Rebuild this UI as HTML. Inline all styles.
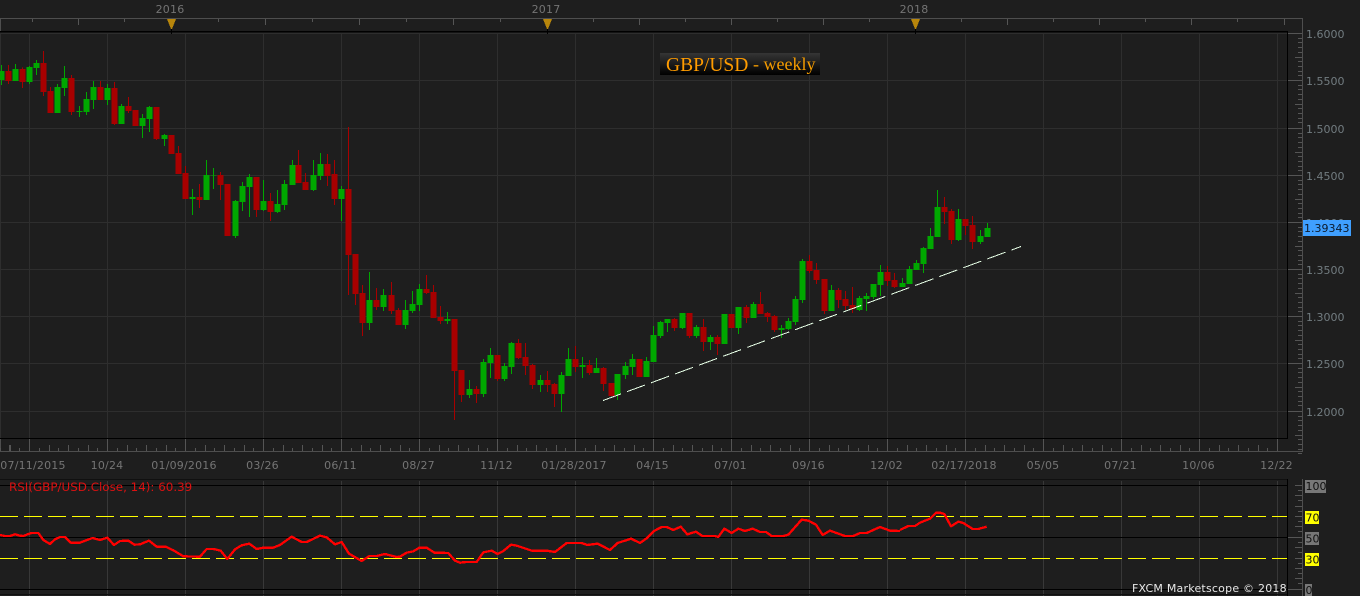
<!DOCTYPE html>
<html>
<head>
<meta charset="utf-8">
<title>GBP/USD weekly</title>
<style>
html,body{margin:0;padding:0;background:#1e1e1e;width:1360px;height:596px;overflow:hidden}
svg{display:block}
text{font-family:"DejaVu Sans","Liberation Sans",sans-serif;font-size:11px}
.d text,.d{fill:#747474;text-anchor:middle;letter-spacing:.2px}
.a text{fill:#727c80}
.c{shape-rendering:crispEdges}
.w{fill:none;stroke-width:1}
.b{fill:none;stroke-width:6}
.g{stroke:#00a800}
.r{stroke:#a80000}
</style>
</head>
<body>
<svg width="1360" height="596" viewBox="0 0 1360 596" xmlns="http://www.w3.org/2000/svg">
<defs>
<pattern id="bt" x="29" y="439" width="78" height="12" patternUnits="userSpaceOnUse">
<path d="M.5 0V12M10.5 9V12M20.5 6V12M29.5 9V12M39.5 6V12M49.5 9V12M59.5 6V12M68.5 9V12" stroke="#555" fill="none"/>
</pattern>
<g id="t" fill="none" stroke="#555">
<path d="M1288 .5H1302M1298 5.5H1302M1298 9.5H1302M1298 14.5H1302M1298 19.5H1302M1295 24.5H1302M1298 28.5H1302M1298 33.5H1302M1298 38.5H1302M1298 42.5H1302"/>
</g>
<g id="u" fill="none" stroke="#555">
<path d="M1295 .5H1302M1298 5.5H1302"/>
</g>
</defs>

<!-- grid -->
<g class="c" fill="none">
<path stroke="#2e2e2e" d="M0 33.5H1287M0 80.5H1287M0 128.5H1287M0 175.5H1287M0 222.5H1287M0 269.5H1287M0 316.5H1287M0 363.5H1287M0 411.5H1287"/>
<path stroke="#2e2e2e" d="M.5 33V438M29.5 33V438M107.5 33V438M185.5 33V438M263.5 33V438M341.5 33V438M419.5 33V438M497.5 33V438M575.5 33V438M653.5 33V438M731.5 33V438M809.5 33V438M887.5 33V438M965.5 33V438M1043.5 33V438M1121.5 33V438M1199.5 33V438M1277.5 33V438"/>
<path stroke="#383838" d="M29.5 481V596M107.5 481V596M185.5 481V596M263.5 481V596M341.5 481V596M419.5 481V596M497.5 481V596M575.5 481V596M653.5 481V596M731.5 481V596M809.5 481V596M887.5 481V596M965.5 481V596M1043.5 481V596M1121.5 481V596M1199.5 481V596M1277.5 481V596"/>

<!-- top ruler -->
<path stroke="#4e4e4e" d="M0 18.5H1302.5M.5 18V31M1302.5 18V451M0 451.5H1303M.5 439V451"/>
<path stroke="#555" d="M32.5 19V22M78.5 19V25M124.5 19V22M218.5 19V22M265.5 19V25M312.5 19V22M359.5 19V25M406.5 19V22M453.5 19V25M500.5 19V22M593.5 19V22M639.5 19V25M685.5 19V22M731.5 19V25M777.5 19V22M823.5 19V25M869.5 19V22M961.5 19V22M1007.5 19V25M1053.5 19V22M1099.5 19V25M1145.5 19V22M1191.5 19V25M1237.5 19V22M1284.5 19V25"/>
<path stroke="#000" d="M0 31.5H1288M1287.5 31V439M0 438.5H1288"/>
<path stroke="#141414" d="M0 32.5H1287"/>
<!-- bottom ruler ticks -->
<rect x="0" y="439" width="1287" height="12" fill="url(#bt)"/>
<path stroke="#555" d="M9.5 445V451M19.5 448V451"/>
<!-- right axis ticks -->
<use href="#t" y="33"/><use href="#t" y="80"/><use href="#t" y="128"/><use href="#t" y="175"/><use href="#t" y="222"/><use href="#t" y="269"/><use href="#t" y="316"/><use href="#t" y="363"/><use href="#t" y="411"/>
<!-- RSI frame -->
<path stroke="#101010" d="M0 479.5H1288M0 594.5H1288"/>
<path stroke="#000" d="M0 485.5H1288M0 537.5H1288M0 589.5H1288M1287.5 479V596"/>
<path stroke="#4e4e4e" d="M1302.5 479V596"/>
<use href="#u" y="485"/><use href="#u" y="495"/><use href="#u" y="506"/><use href="#u" y="516"/><use href="#u" y="526"/><use href="#u" y="537"/><use href="#u" y="547"/><use href="#u" y="558"/><use href="#u" y="568"/><use href="#u" y="578"/>
<path stroke="#555" d="M1288 537.5H1302M1288 589.5H1302"/>
<path stroke="#ffff00" stroke-dasharray="18 6" d="M0 516.5H1287M0 558.5H1287"/>
</g>

<!-- candles: x in px, y in 1/3 px -->
<g class="c" transform="scale(1,.333333)">
<path class="w g" d="M1.5 195V255M15.5 192V243M29.5 198V252M36.5 180V225M57.5 252V339M64.5 198V288M79.5 318V351M86.5 276V345M93.5 243V327M107.5 252V315M121.5 312V372M142.5 342V414M149.5 318V396M164.5 402V438M192.5 567V645M206.5 480V600M213.5 504V567M235.5 600V714M242.5 546V633M249.5 522V651M263.5 540V633M277.5 570V639M284.5 540V630M292.5 480V555M313.5 480V573M320.5 459V540M341.5 558V663"/>
<path class="b g" d="M1.5 213V240M15.5 207V243M29.5 201V246M36.5 189V204M57.5 261V339M64.5 234V264M79.5 333V336M86.5 297V336M93.5 261V300M107.5 264V300M121.5 318V372M142.5 354V378M149.5 321V357M164.5 405V417M192.5 591V597M206.5 525V600M213.5 525V527M235.5 603V708M242.5 558V606M249.5 531V561M263.5 603V630M277.5 612V636M284.5 552V615M292.5 495V555M313.5 525V570M320.5 492V528M341.5 567V597"/>
<path class="w r" d="M8.5 195V252M22.5 202V264M43.5 153V288M50.5 261V339M71.5 225V345M100.5 243V300M114.5 246V375M128.5 291V339M135.5 330V378M156.5 321V420M171.5 405V462M178.5 438V522M185.5 498V597M199.5 552V624M220.5 516V600M227.5 552V708M256.5 531V651M270.5 579V663M298.5 450V549M305.5 519V570M327.5 462V558M334.5 480V615"/>
<path class="b r" d="M8.5 213V243M22.5 207V246M43.5 189V276M50.5 273V339M71.5 234V336M100.5 261V300M114.5 264V372M128.5 318V333M135.5 330V378M156.5 321V417M171.5 405V462M178.5 459V522M185.5 519V597M199.5 591V600M220.5 525V555M227.5 552V708M256.5 531V630M270.5 603V636M298.5 495V549M305.5 546V570M327.5 492V528M334.5 522V597"/>
</g>
<g class="c" transform="scale(1,.333333) translate(0,360)">
<path class="w g" d="M369.5 456V630M383.5 507V573M405.5 540V627M412.5 513V579M419.5 492V573M447.5 576V612M469.5 780V834M483.5 717V831M490.5 684V774M504.5 729V783M511.5 666V762M540.5 765V816M561.5 756V876M568.5 684V768M582.5 711V774M596.5 714V759M617.5 762V840M625.5 726V777M632.5 702V765"/>
<path class="b g" d="M369.5 540V609M383.5 525V561M405.5 570V615M412.5 552V573M419.5 507V555M447.5 597V603M469.5 807V825M483.5 726V822M490.5 705V729M504.5 738V777M511.5 669V741M540.5 780V795M561.5 765V822M568.5 717V768M582.5 735V741M596.5 744V759M617.5 762V825M625.5 738V765M632.5 717V741"/>
<path class="w r" d="M348.5 21V525M355.5 402V555M362.5 495V648M376.5 504V570M391.5 486V582M398.5 564V615M426.5 465V522M433.5 495V594M440.5 558V612M454.5 597V900M461.5 750V846M476.5 798V849M497.5 705V783M518.5 657V717M525.5 669V765M532.5 732V807M547.5 753V816M554.5 789V861M575.5 678V756M589.5 720V765M603.5 741V813M611.5 789V828M639.5 717V771"/>
<path class="b r" d="M348.5 207V405M355.5 402V522M362.5 519V609M376.5 540V561M391.5 525V573M398.5 570V615M426.5 507V519M433.5 516V594M440.5 591V603M454.5 597V753M461.5 750V825M476.5 807V822M497.5 705V777M518.5 669V714M525.5 711V738M532.5 735V795M547.5 780V795M554.5 792V822M575.5 717V741M589.5 735V759M603.5 744V792M611.5 789V828M639.5 717V771"/>
</g>
<g class="c" transform="scale(1,.333333) translate(0,510)">
<path class="w g" d="M646.5 561V621M653.5 468V576M660.5 453V504M667.5 447V486M682.5 429V477M696.5 465V504M710.5 495V540M724.5 432V522M738.5 411V492M753.5 396V444M781.5 465V504M788.5 444V480M795.5 378V465M802.5 267V399M831.5 345V423M859.5 378V423M866.5 369V423M873.5 342V387M880.5 285V378M902.5 324V351M909.5 288V342M916.5 270V300M923.5 231V309M930.5 174V237M937.5 60V201M958.5 117V213M980.5 180V222M987.5 159V201"/>
<path class="b g" d="M646.5 573V621M653.5 495V576M660.5 456V498M667.5 447V459M682.5 429V474M696.5 471V498M710.5 501V516M724.5 432V522M738.5 411V474M753.5 402V444M781.5 474V480M788.5 453V477M795.5 387V456M802.5 273V390M831.5 360V423M859.5 384V420M866.5 378V387M873.5 342V381M880.5 306V345M902.5 339V351M909.5 297V342M916.5 279V300M923.5 234V282M930.5 198V237M937.5 111V201M958.5 147V210M980.5 198V216M987.5 174V201"/>
<path class="w r" d="M674.5 444V483M689.5 429V504M703.5 447V543M717.5 495V555M731.5 432V474M746.5 405V459M760.5 366V432M767.5 426V456M774.5 435V486M809.5 255V309M816.5 279V342M824.5 327V432M838.5 354V414M845.5 363V420M852.5 351V429M887.5 288V348M894.5 309V354M944.5 81V162M951.5 117V222M965.5 147V195M972.5 138V237"/>
<path class="b r" d="M674.5 447V474M689.5 429V498M703.5 471V516M717.5 501V522M731.5 432V474M746.5 411V444M760.5 402V432M767.5 429V441M774.5 438V480M809.5 273V303M816.5 300V330M824.5 327V423M838.5 360V390M845.5 387V408M852.5 405V417M887.5 306V333M894.5 330V351M944.5 111V126M951.5 123V210M965.5 147V168M972.5 165V216"/>
</g>

<!-- trend line -->
<line class="c" x1="603" y1="400.5" x2="1021" y2="246.5" stroke="#e6ffe6" stroke-width="1" stroke-dasharray="19.2 6.4"/>

<!-- RSI curve -->
<g class="c" fill="none" stroke="#ff0000" stroke-width="7" stroke-linejoin="round">
<polyline transform="translate(0,430) scale(.333333)" points="0,315 15,318 30,318 45,313 60,317 70,318 85,312 95,309 115,309 130,330 150,342 165,328 180,321 195,321 212,338 240,338 258,331 278,324 300,330 322,323 342,345 360,333 385,332 403,344 420,343 447,332 470,350 497,350 520,361 550,379 600,380 620,357 640,357 662,362 682,387 705,358 725,346 748,341 770,357 790,353 820,353 840,345 875,320 905,336 920,336 960,317 980,322 1005,343 1025,336 1047,371 1085,393 1108,378 1130,378 1155,372 1190,381 1200,380 1220,368 1240,364 1258,353 1280,353 1303,368 1345,369 1350,375"/>
<polyline transform="translate(450,430) scale(.333333)" points="0,375 15,392 30,398 48,396 80,396 100,367 125,362 143,372 160,363 183,344 200,347 245,362 290,362 315,366 350,339 395,339 412,345 443,341 480,360 503,339 543,326 570,339 590,325 612,303 635,291 650,291 670,300 692,290 712,313 738,305 757,318 795,318 805,321 823,296 845,309 865,296 885,303 908,296 930,306 948,306 965,318 1000,318 1015,314 1055,269 1075,272 1098,284 1118,315 1140,302 1185,318 1210,318 1230,309 1250,309 1290,291 1320,302 1350,303"/>
<polyline transform="translate(900,430) scale(.333333)" points="0,300 25,288 45,288 60,278 90,266 108,248 120,248 133,252 153,289 175,275 190,279 218,297 235,297 260,290"/>
</g>

<!-- year markers -->
<g class="c">
<path d="M171.5 28V34M547.5 28V34M915.5 28V34" stroke="#000" fill="none"/>
<polygon fill="#b8860b" points="167,19 176,19 172,29 171,29"/>
<polygon fill="#b8860b" points="543,19 552,19 548,29 547,29"/>
<polygon fill="#b8860b" points="911,19 920,19 916,29 915,29"/>
</g>

<!-- year labels -->
<g class="d">
<text x="170" y="13">2016</text><text x="546" y="13">2017</text><text x="914" y="13">2018</text>
<text x="33" y="469">07/11/2015</text><text x="107" y="469">10/24</text><text x="184" y="469">01/09/2016</text><text x="262.5" y="469">03/26</text><text x="340.5" y="469">06/11</text><text x="418.5" y="469">08/27</text><text x="496.5" y="469">11/12</text><text x="574" y="469">01/28/2017</text><text x="652.5" y="469">04/15</text><text x="730.5" y="469">07/01</text><text x="808.5" y="469">09/16</text><text x="886.5" y="469">12/02</text><text x="964" y="469">02/17/2018</text><text x="1043" y="469">05/05</text><text x="1120.5" y="469">07/21</text><text x="1198.5" y="469">10/06</text><text x="1276.5" y="469">12/22</text>
</g>

<!-- price labels -->
<g class="a">
<text x="1306" y="38">1.6000</text><text x="1306" y="85">1.5500</text><text x="1306" y="133">1.5000</text><text x="1306" y="180">1.4500</text><text x="1306" y="227">1.4000</text><text x="1306" y="274">1.3500</text><text x="1306" y="321">1.3000</text><text x="1306" y="368">1.2500</text><text x="1306" y="416">1.2000</text>
</g>
<rect x="1303" y="220" width="48" height="16" fill="#3f9fff"/>
<text x="1304" y="232" fill="#0c1a2c">1.39343</text>

<!-- title -->
<defs><linearGradient id="tg" x1="0" y1="0" x2="0" y2="1"><stop offset="0" stop-color="#353535"/><stop offset="1" stop-color="#000"/></linearGradient></defs>
<rect x="660" y="53" width="160" height="22" fill="url(#tg)"/>
<text x="666" y="71" style="font-family:'Liberation Serif',serif;font-size:19.5px" fill="#ff9c00">GBP/USD</text>
<text x="753" y="70" style="font-family:'Liberation Serif',serif;font-size:18px" fill="#f59c00">- weekly</text>

<!-- RSI labels -->
<text x="9" y="491" fill="#dd1111" style="font-size:11.9px">RSI(GBP/USD.Close, 14): 60.39</text>
<rect x="1305" y="480" width="21" height="13" fill="#777"/><text x="1305.5" y="490" fill="#111">100</text>
<rect x="1305" y="511" width="14" height="13" fill="#ffff00"/><text x="1305.5" y="521.5" fill="#111">70</text>
<rect x="1305" y="532" width="14" height="13" fill="#777"/><text x="1305.5" y="542.5" fill="#111">50</text>
<rect x="1305" y="553" width="14" height="13" fill="#ffff00"/><text x="1305.5" y="563.5" fill="#111">30</text>
<rect x="1305" y="584" width="7" height="12" fill="#777"/><text x="1305.5" y="594" fill="#111">0</text>
<text x="1132" y="592" fill="#e8e8e8" style="letter-spacing:.22px">FXCM Marketscope © 2018</text>
</svg>
</body>
</html>
